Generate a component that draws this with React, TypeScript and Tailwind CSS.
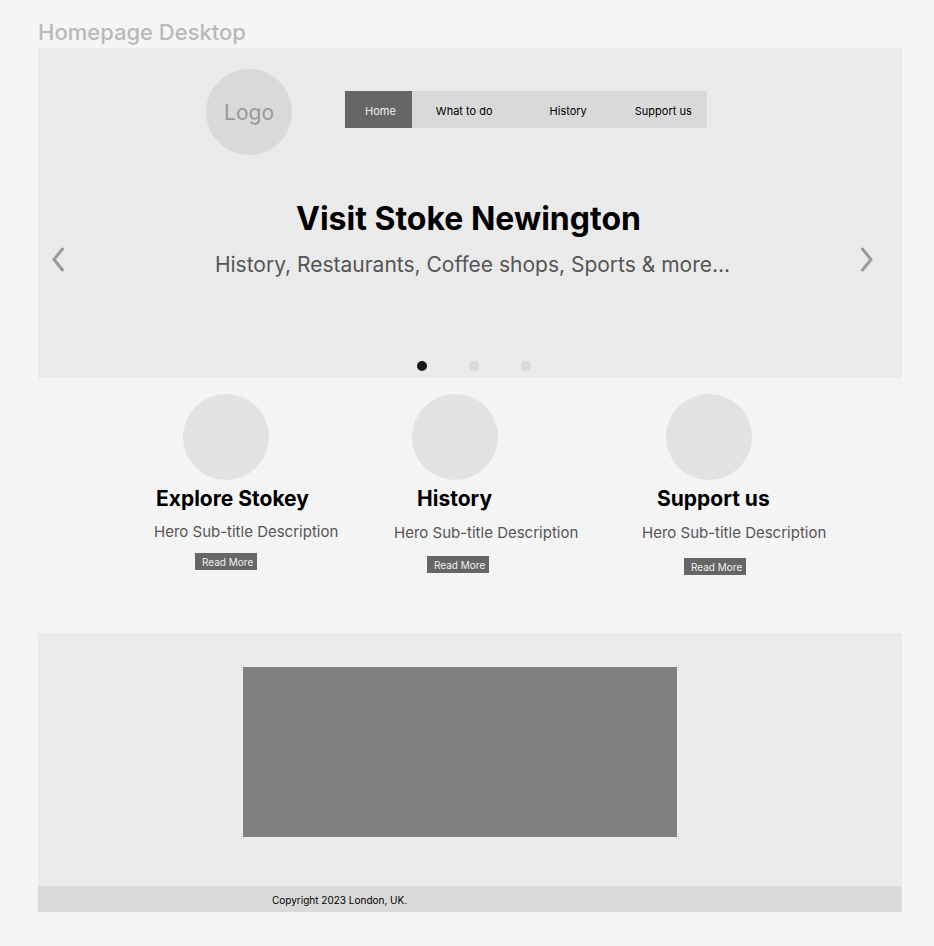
const navLinks = [
  { label: "Home", style: "bg-[#666666] pl-5 pr-4 text-[#f0f0f0]" },
  { label: "What to do", style: "pl-6" },
  { label: "History", style: "pl-[57px]" },
  { label: "Support us", style: "pl-12 pr-[15px]" },
];

const features = [
  { title: "Explore Stokey", circle: "ml-[29px]", heading: "ml-[2px]", text: "mt-[7px]", button: "ml-[41px] mt-[9px]" },
  { title: "History", circle: "ml-[18px]", heading: "ml-[23px]", text: "mt-2", button: "ml-[33px] mt-[11px]" },
  { title: "Support us", circle: "ml-[24px]", heading: "ml-[15px]", text: "mt-2", button: "ml-[42px] mt-[13px]" },
];

function Chevron({ points }: { points: string }) {
  return (
    <svg viewBox="0 0 12 26" className="h-[26px] w-3" fill="none" stroke="#9b9b9b" strokeWidth="3" strokeLinecap="round" strokeLinejoin="round" aria-hidden="true">
      <polyline points={points} />
    </svg>
  );
}

export default function App() {
  return (
    <div className="min-h-screen bg-[#f5f5f5] pt-4 pr-8 pb-[34px] pl-[38px] font-['Inter',sans-serif] text-black">
      <p className="text-[22px] leading-8 font-medium text-[#b9b9b9]">Homepage Desktop</p>

      <div>
        <section className="bg-[#eaeaea] pt-[21px] pb-[7px]">
          <header className="flex items-center pl-[168px]">
            <div className="flex size-[86px] shrink-0 items-center justify-center rounded-full bg-[#d9d9d9] pt-0.5 text-[21px] text-[#999999]">
              Logo
            </div>
            <nav className="mb-[5px] ml-[53px] flex h-[37px] bg-[#d9d9d9] text-[11px] whitespace-nowrap">
              {navLinks.map((link) => (
                <a key={link.label} href="#" className={`flex items-center pt-1 ${link.style}`}>
                  {link.label}
                </a>
              ))}
            </nav>
          </header>

          <div className="mt-[43px] flex items-center pr-[29px] pl-[14px]">
            <button type="button" aria-label="Previous slide">
              <Chevron points="10.5,2 2,12.5 10.5,23" />
            </button>
            <div className="flex-1 pt-px pb-10 pl-5 text-center">
              <h1 className="pr-2 text-[32px] leading-10 font-bold">Visit Stoke Newington</h1>
              <p className="mt-[10px] text-[21px] leading-8 text-[#555555]">
                History, Restaurants, Coffee shops, Sports &amp; more...
              </p>
            </div>
            <button type="button" aria-label="Next slide">
              <Chevron points="1.5,2 10,12.5 1.5,23" />
            </button>
          </div>

          <div className="mt-10 flex justify-center gap-[42px] pl-2">
            <button type="button" aria-label="Slide 1" className="size-[10px] rounded-full bg-[#171717]" />
            <button type="button" aria-label="Slide 2" className="size-[10px] rounded-full bg-[#d9d9d9]" />
            <button type="button" aria-label="Slide 3" className="size-[10px] rounded-full bg-[#d9d9d9]" />
          </div>
        </section>

        <section className="grid grid-cols-[240fr_248fr_260fr] bg-[#f4f4f4] pt-4 pb-[58px] pl-[116px]">
          {features.map((feature) => (
            <article key={feature.title}>
              <div className={`size-[86px] rounded-full bg-[#e2e2e2] ${feature.circle}`} />
              <h2 className={`mt-[5px] text-[21px] leading-7 font-bold whitespace-nowrap ${feature.heading}`}>{feature.title}</h2>
              <p className={`text-[15px] leading-6 whitespace-nowrap text-[#555555] ${feature.text}`}>Hero Sub-title Description</p>
              <button
                type="button"
                className={`block h-[17px] w-[62px] bg-[#666666] pl-[7px] text-left text-[10px] leading-[18px] whitespace-nowrap text-[#f0f0f0] ${feature.button}`}
              >
                Read More
              </button>
            </article>
          ))}
        </section>

        <section className="bg-[#eaeaea] pt-[34px] pr-[225px] pb-[49px] pl-[205px]">
          <div className="h-[170px] bg-[#7f7f7f]" />
        </section>

        <footer className="bg-[#d9d9d9] pt-0.5 pl-[234px] text-[10px] leading-6">Copyright 2023 London, UK.</footer>
      </div>
    </div>
  );
}
